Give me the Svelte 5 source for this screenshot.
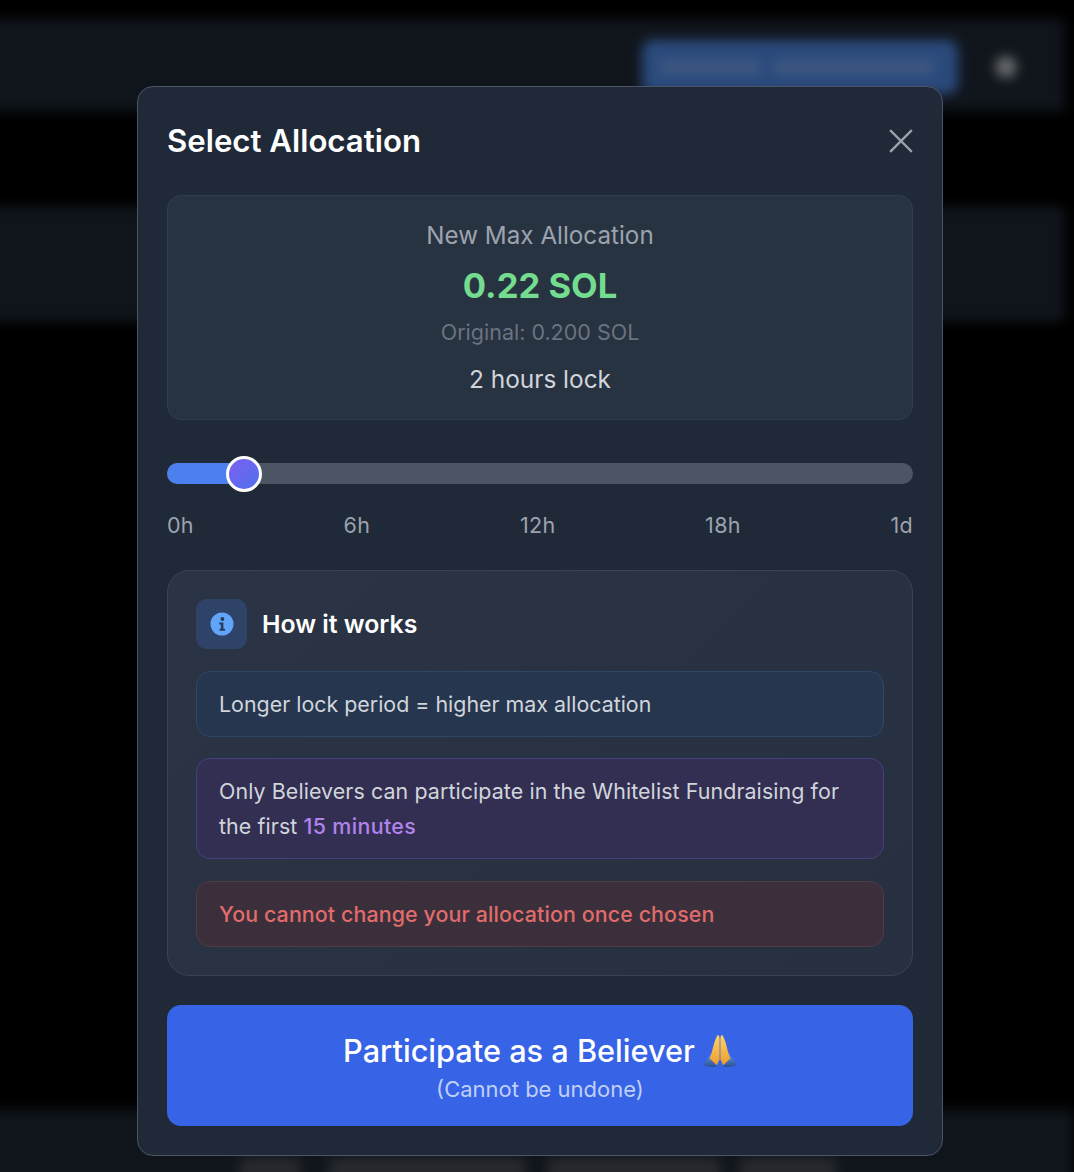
<script>
  const ticks = ['0h', '6h', '12h', '18h', '1d'];
</script>

<div class="page">
  <div class="backdrop">
    <div class="topbar">
      <div class="wallet"><span class="ghost g1"></span><span class="ghost g2"></span></div>
      <div class="avatar"></div>
    </div>
    <div class="band"></div>
    <div class="spacer"></div>
    <div class="footer">
      <span class="fg f1"></span><span class="fg f2"></span><span class="fg f3"></span><span class="fg f4"></span>
    </div>
  </div>

  <div class="modal">
    <header class="head">
      <h2>Select Allocation</h2>
      <button class="close" aria-label="Close">
        <svg viewBox="0 0 24 24" width="24" height="24" fill="none" stroke="#9ca3af" stroke-width="2.4" stroke-linecap="square"><path d="M2 2 L22 22 M22 2 L2 22" /></svg>
      </button>
    </header>

    <section class="summary">
      <div class="s-label">New Max Allocation</div>
      <div class="s-value">0.22 SOL</div>
      <div class="s-orig">Original: 0.200 SOL</div>
      <div class="s-lock">2 hours lock</div>
    </section>

    <div class="slider">
      <div class="fill"></div>
      <div class="thumb"></div>
    </div>
    <div class="ticks">
      {#each ticks as t}<span>{t}</span>{/each}
    </div>

    <section class="how">
      <div class="how-head">
        <div class="how-icon">
          <svg viewBox="0 0 24 24" width="24" height="24"><circle cx="12" cy="12" r="11.5" fill="#60a5fa"/><circle cx="12.4" cy="7" r="1.9" fill="#283a5c"/><path d="M9.2 10.6h4.2v6.2h1.6v2H9.6v-2h1.3v-4.2H9.2z" fill="#283a5c"/></svg>
        </div>
        <h3>How it works</h3>
      </div>
      <div class="notes">
        <div class="note blue">Longer lock period = higher max allocation</div>
        <div class="note purple">Only Believers can participate in the Whitelist Fundraising for the first <span class="hl">15 minutes</span></div>
        <div class="note red">You cannot change your allocation once chosen</div>
      </div>
    </section>

    <button class="cta">
      <span class="cta-main">Participate as a Believer
        <svg class="pray" viewBox="0 0 36 36" width="34" height="34">
          <defs>
            <linearGradient id="sleeve" x1="0" y1="0" x2="0" y2="1"><stop offset="0" stop-color="#6f9fe0"/><stop offset="1" stop-color="#2a4f95"/></linearGradient>
            <linearGradient id="hand" x1="0" y1="0" x2="0" y2="1"><stop offset="0" stop-color="#ffd468"/><stop offset="1" stop-color="#ee9c2e"/></linearGradient>
          </defs>
          <path d="M0 33 L9 20 L15 27 L14 35 L8 35 Z" fill="url(#sleeve)"/>
          <path d="M36 33 L27 20 L21 27 L22 35 L28 35 Z" fill="url(#sleeve)"/>
          <path d="M15.5 1 C16.8 1 17.6 2.4 17.6 5 L17.6 27 L14.5 33 L7 26 C10 20 11 8 15.5 1 Z" fill="url(#hand)"/>
          <path d="M20.5 1 C19.2 1 18.4 2.4 18.4 5 L18.4 27 L21.5 33 L29 26 C26 20 25 8 20.5 1 Z" fill="url(#hand)"/>
        </svg>
      </span>
      <span class="cta-sub">(Cannot be undone)</span>
    </button>
  </div>
</div>

<style>
  :global(body) { margin: 0; background: #000; }
  .page {
    position: relative;
    width: 1074px;
    height: 1172px;
    overflow: hidden;
    background: #000;
    font-family: Inter, "Liberation Sans", sans-serif;
  }
  .backdrop {
    display: flex;
    flex-direction: column;
    height: calc(100% + 20px);
    margin-left: -20px;
    filter: blur(6px);
  }
  .topbar {
    margin-top: 19px;
    margin-right: 10px;
    height: 92px;
    box-sizing: border-box;
    background: #10151c;
    display: flex;
    align-items: center;
    justify-content: flex-end;
    padding-right: 47px;
    padding-top: 4px;
    gap: 37px;
  }
  .wallet {
    width: 316px;
    height: 54px;
    border-radius: 10px;
    background: #2a4a7c;
    display: flex;
    align-items: center;
    gap: 14px;
    padding: 0 18px;
    box-sizing: border-box;
  }
  .ghost { height: 14px; background: #3f5881; border-radius: 3px; }
  .g1 { width: 100px; }
  .g2 { width: 160px; }
  .avatar { width: 22px; height: 22px; border-radius: 50%; background: #66686b; }
  .band {
    margin-top: 96px;
    margin-right: 10px;
    height: 114px;
    background: #10151c;
  }
  .spacer { flex: 1; }
  .footer {
    height: 82px;
    background: #10151c;
    display: flex;
    justify-content: flex-start;
    align-items: flex-end;
    padding-left: 260px;
    padding-bottom: 10px;
    box-sizing: border-box;
  }
  .fg { height: 24px; background: #27292d; }
  .f1 { width: 60px; margin-right: 29px; }
  .f2 { width: 196px; margin-right: 23px; }
  .f3 { width: 172px; margin-right: 20px; }
  .f4 { width: 96px; }

  .modal {
    position: absolute;
    left: 137px;
    top: 86px;
    width: 806px;
    height: 1070px;
    box-sizing: border-box;
    padding: 29px;
    background: #1f2937;
    border: 1px solid #4b5563;
    border-radius: 16px;
    display: flex;
    flex-direction: column;
  }
  .head {
    display: flex;
    justify-content: space-between;
    align-items: center;
    height: 50px;
    margin-bottom: 29px;
  }
  h2 {
    margin: 0;
    font-size: 31.2px;
    font-weight: 600;
    color: #fff;
    line-height: 50px;
  }
  .close { background: none; border: 0; padding: 0; display: flex; }
  .summary {
    height: 225px;
    box-sizing: border-box;
    background: #283342;
    border: 1px solid #323d4c;
    border-radius: 14px;
    display: flex;
    flex-direction: column;
    align-items: center;
    padding-top: 22px;
  }
  .s-label { font-size: 24.2px; color: #9ca3af; line-height: 36px; letter-spacing: 0.02px; }
  .s-value { font-size: 34.6px; font-weight: 700; color: #74dc8f; line-height: 44px; margin-top: 9px; }
  .s-orig { font-size: 21.5px; color: #6b7280; line-height: 32px; margin-top: 9px; }
  .s-lock { font-size: 24.4px; color: #d1d5db; line-height: 36px; margin-top: 13px; }

  .slider {
    position: relative;
    margin-top: 43px;
    height: 21px;
    border-radius: 11px;
    background: #4b5563;
  }
  .fill {
    height: 100%;
    width: 77px;
    border-radius: 11px 0 0 11px;
    background: #4b80ee;
  }
  .thumb {
    position: absolute;
    left: 59px;
    top: -7px;
    width: 36px;
    height: 36px;
    box-sizing: border-box;
    border-radius: 50%;
    border: 3px solid #fff;
    background: linear-gradient(135deg, #7c5ff0, #4f72ee);
  }
  .ticks {
    display: flex;
    justify-content: space-between;
    margin-top: 26px;
    font-size: 21.5px;
    letter-spacing: 0.3px;
    line-height: 30px;
    color: #9ca3af;
  }
  .how {
    margin-top: 30px;
    height: 406px;
    box-sizing: border-box;
    padding: 28px 28px 28px;
    background: linear-gradient(135deg, #2b3444, #263041);
    border: 1px solid #394352;
    border-radius: 22px;
    display: flex;
    flex-direction: column;
  }
  .how-head { display: flex; align-items: center; gap: 15px; height: 50px; margin-bottom: 22px; }
  .how-icon {
    width: 51px;
    height: 50px;
    border-radius: 11px;
    background: #2f4267;
    display: flex;
    align-items: center;
    justify-content: center;
  }
  h3 { margin: 0; font-size: 24.8px; font-weight: 600; color: #fff; }
  .notes { display: flex; flex-direction: column; gap: 21px; }
  .note {
    box-sizing: border-box;
    padding: 14.5px 22px;
    border-radius: 14px;
    border: 1px solid;
    font-size: 21.4px;
    line-height: 35px;
    color: #d1d5db;
  }
  .blue { background: #26364f; border-color: #2f4669; }
  .purple { background: #332f52; border-color: #46407a; letter-spacing: 0.09px; }
  .red { background: #3a2f3a; border-color: #533a44; color: #e06c6c; font-weight: 500; letter-spacing: 0.11px; margin-top: 1px; }
  .hl { color: #b283ec; font-weight: 500; letter-spacing: 0.35px; }
  .cta {
    margin-top: 29px;
    height: 121px;
    border: 0;
    border-radius: 14px;
    background: #3763e6;
    display: flex;
    flex-direction: column;
    align-items: center;
    justify-content: center;
    font-family: inherit;
    padding: 2px 0 0;
  }
  .cta-main {
    display: flex;
    align-items: center;
    gap: 8px;
    color: #fff;
    font-size: 30.7px;
    font-weight: 500;
    line-height: 44px;
  }
  .cta-sub { color: #bfd0f8; font-size: 22px; line-height: 30px; margin-top: 1px; }
  .pray { flex: none; }
</style>
